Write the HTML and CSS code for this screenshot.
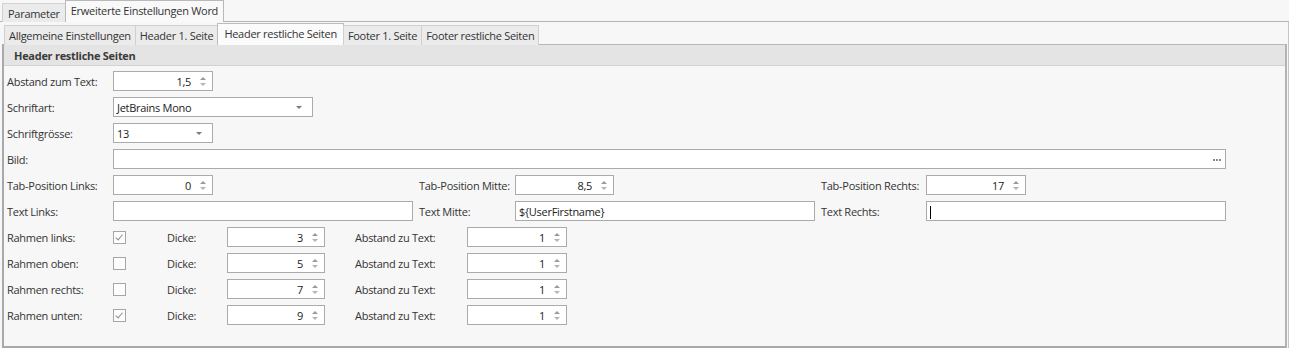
FILE: index.html
```html
<!DOCTYPE html>
<html lang="de">
<head>
<meta charset="utf-8">
<title>Erweiterte Einstellungen Word</title>
<link rel="stylesheet" href="styles.css">
</head>
<body>
<div class="window">
  <div class="tabs tabs-top">
    <div class="tab">Parameter</div>
    <div class="tab active">Erweiterte Einstellungen Word</div>
  </div>
  <div class="page">
    <div class="tabs tabs-inner">
      <div class="tab">Allgemeine Einstellungen</div>
      <div class="tab">Header 1. Seite</div>
      <div class="tab active">Header restliche Seiten</div>
      <div class="tab">Footer 1. Seite</div>
      <div class="tab">Footer restliche Seiten</div>
    </div>
    <div class="group">
      <div class="group-head">Header restliche Seiten</div>
      <div class="group-body">
        <div class="row">
          <span class="lbl w106">Abstand zum Text:</span>
          <div class="field spin w100"><span class="val">1,5</span><span class="spinbtn"><i class="up"></i><i class="down"></i></span></div>
        </div>
        <div class="row">
          <span class="lbl w106">Schriftart:</span>
          <div class="field combo w200"><span class="val left">JetBrains Mono</span><i class="drop"></i></div>
        </div>
        <div class="row">
          <span class="lbl w106">Schriftgrösse:</span>
          <div class="field combo w100"><span class="val left">13</span><i class="drop"></i></div>
        </div>
        <div class="row">
          <span class="lbl w106">Bild:</span>
          <div class="field wbild"><span class="val left"></span><span class="ellipsis"><i></i><i></i><i></i></span></div>
        </div>
        <div class="row">
          <div class="cellA">
            <span class="lbl w106">Tab-Position Links:</span>
            <div class="field spin w100"><span class="val">0</span><span class="spinbtn"><i class="up"></i><i class="down"></i></span></div>
          </div>
          <div class="cellB">
            <span class="lbl w96">Tab-Position Mitte:</span>
            <div class="field spin w99"><span class="val">8,5</span><span class="spinbtn"><i class="up"></i><i class="down"></i></span></div>
          </div>
          <div class="cellC">
            <span class="lbl w105">Tab-Position Rechts:</span>
            <div class="field spin w100"><span class="val">17</span><span class="spinbtn"><i class="up"></i><i class="down"></i></span></div>
          </div>
        </div>
        <div class="row">
          <div class="cellA">
            <span class="lbl w106">Text Links:</span>
            <div class="field w300"><span class="val left"></span></div>
          </div>
          <div class="cellB">
            <span class="lbl w96">Text Mitte:</span>
            <div class="field w300"><span class="val left">${UserFirstname}</span></div>
          </div>
          <div class="cellC">
            <span class="lbl w105">Text Rechts:</span>
            <div class="field w300"><span class="val left"><span class="caret"></span></span></div>
          </div>
        </div>
        <div class="row">
          <span class="lbl w106">Rahmen links:</span>
          <div class="chkcell"><span class="chk checked"></span></div>
          <span class="lbl w60">Dicke:</span>
          <div class="spincell"><div class="field spin w98"><span class="val">3</span><span class="spinbtn"><i class="up"></i><i class="down"></i></span></div></div>
          <span class="lbl w112">Abstand zu Text:</span>
          <div class="field spin w100"><span class="val">1</span><span class="spinbtn"><i class="up"></i><i class="down"></i></span></div>
        </div>
        <div class="row">
          <span class="lbl w106">Rahmen oben:</span>
          <div class="chkcell"><span class="chk"></span></div>
          <span class="lbl w60">Dicke:</span>
          <div class="spincell"><div class="field spin w98"><span class="val">5</span><span class="spinbtn"><i class="up"></i><i class="down"></i></span></div></div>
          <span class="lbl w112">Abstand zu Text:</span>
          <div class="field spin w100"><span class="val">1</span><span class="spinbtn"><i class="up"></i><i class="down"></i></span></div>
        </div>
        <div class="row">
          <span class="lbl w106">Rahmen rechts:</span>
          <div class="chkcell"><span class="chk"></span></div>
          <span class="lbl w60">Dicke:</span>
          <div class="spincell"><div class="field spin w98"><span class="val">7</span><span class="spinbtn"><i class="up"></i><i class="down"></i></span></div></div>
          <span class="lbl w112">Abstand zu Text:</span>
          <div class="field spin w100"><span class="val">1</span><span class="spinbtn"><i class="up"></i><i class="down"></i></span></div>
        </div>
        <div class="row">
          <span class="lbl w106">Rahmen unten:</span>
          <div class="chkcell"><span class="chk checked"></span></div>
          <span class="lbl w60">Dicke:</span>
          <div class="spincell"><div class="field spin w98"><span class="val">9</span><span class="spinbtn"><i class="up"></i><i class="down"></i></span></div></div>
          <span class="lbl w112">Abstand zu Text:</span>
          <div class="field spin w100"><span class="val">1</span><span class="spinbtn"><i class="up"></i><i class="down"></i></span></div>
        </div>
      </div>
    </div>
  </div>
</div>
</body>
</html>
```
FILE: styles.css
```css
* { box-sizing: border-box; }
html, body {
  margin: 0;
  padding: 0;
  background: #f7f7f7;
}
body {
  width: 1289px;
  height: 348px;
  overflow: hidden;
  font-family: "Segoe UI", "Open Sans", "Noto Sans", sans-serif;
  font-size: 11px;
  letter-spacing: -0.28px;
  color: #333333;
}
.window {
  width: 1289px;
  height: 348px;
  display: flex;
  flex-direction: column;
}
.tabs {
  display: flex;
  align-items: flex-end;
  position: relative;
  z-index: 1;
}
.tabs-top {
  height: 22px;
  padding-left: 2px;
  margin-bottom: -1px;
}
.tab {
  height: 19px;
  padding: 0 5px;
  display: flex;
  align-items: center;
  background: #ebebeb;
  border: 1px solid #d2d2d2;
  border-bottom: none;
  color: #333333;
  white-space: nowrap;
  margin-right: -1px;
}
.tab.active {
  height: 22px;
  background: #f9f9f9;
  border-color: #b9b9b9;
  padding-bottom: 2px;
}
.page {
  flex: 1;
  border-top: 1px solid #b4b4b4;
  border-right: 1px solid #c4c4c4;
  padding: 1px 1px 0 2px;
  display: flex;
  flex-direction: column;
  background: #f7f7f7;
}
.tabs-inner {
  height: 22px;
  padding-left: 2px;
  margin-bottom: -1px;
}
.tabs-inner .tab {
  height: 20px;
  padding: 0 4px;
  background: #ebebeb;
  border-color: #d0d0d0;
}
.tabs-inner .tab.active {
  height: 22px;
  padding: 0 6px 2px;
  background: #fbfbfb;
  border-color: #bcbcbc;
}
.group {
  flex: 1;
  border: 1px solid #b8b8b8;
  border-left: 2px solid #a9a9a9;
  border-right: 2px solid #b3b3b3;
  border-bottom: 2px solid #a9a9a9;
  background: #f7f7f7;
  display: flex;
  flex-direction: column;
}
.group-head {
  height: 21px;
  background: #e4e4e4;
  border-bottom: 1px solid #d3d3d3;
  font-weight: bold;
  color: #3b3b3b;
  padding-left: 10px;
  display: flex;
  align-items: center;
}
.group-body {
  padding: 2px 0 0 3px;
  display: flex;
  flex-direction: column;
}
.row {
  height: 26px;
  display: flex;
  align-items: center;
}
.lbl {
  flex: none;
  white-space: nowrap;
  color: #333333;
}
.w60 { width: 60px; }
.w96 { width: 96px; }
.w105 { width: 105px; }
.w106 { width: 106px; }
.w112 { width: 112px; }
.cellA { width: 412px; display: flex; align-items: center; flex: none; }
.cellB { width: 402px; display: flex; align-items: center; flex: none; }
.cellC { display: flex; align-items: center; flex: none; }
.chkcell { width: 54px; flex: none; display: flex; align-items: center; }
.spincell { width: 128px; flex: none; display: flex; align-items: center; }

.field {
  flex: none;
  height: 20px;
  background: #ffffff;
  border: 1px solid #ababab;
  display: flex;
  align-items: center;
  position: relative;
  color: #222;
}
.w98 { width: 98px; }
.w99 { width: 99px; }
.w100 { width: 100px; }
.w200 { width: 200px; }
.w300 { width: 300px; }
.wbild { width: 1113px; }
.val {
  flex: 1;
  text-align: right;
  padding-right: 5px;
  white-space: nowrap;
}
.val.left {
  text-align: left;
  padding-left: 3px;
}
.spinbtn {
  width: 14px;
  height: 100%;
  flex: none;
  display: flex;
  flex-direction: column;
  justify-content: center;
  align-items: center;
  gap: 3px;
  margin-right: 2px;
}
.spinbtn i {
  display: block;
  width: 0;
  height: 0;
  border-left: 3px solid transparent;
  border-right: 3px solid transparent;
}
.spinbtn .up { border-bottom: 3px solid #9a9a9a; }
.spinbtn .down { border-top: 3px solid #b4b4b4; }
.combo .drop {
  display: block;
  width: 0;
  height: 0;
  border-left: 3px solid transparent;
  border-right: 3px solid transparent;
  border-top: 3px solid #7c7c7c;
  margin-right: 10px;
}
.ellipsis {
  display: flex;
  gap: 1px;
  margin-right: 4px;
  margin-top: 1px;
}
.ellipsis i {
  display: block;
  width: 2px;
  height: 2px;
  background: #8a8a8a;
}
.caret {
  display: inline-block;
  width: 1px;
  height: 13px;
  background: #000;
  vertical-align: middle;
}
.chk {
  display: block;
  width: 13px;
  height: 13px;
  border: 1px solid #a6a6a6;
  background: #fdfdfd;
  position: relative;
}
.chk.checked::after {
  content: "";
  position: absolute;
  left: 3px;
  top: 1px;
  width: 3px;
  height: 6px;
  border-right: 1px solid #8c8c8c;
  border-bottom: 1px solid #8c8c8c;
  transform: rotate(40deg);
}
```
